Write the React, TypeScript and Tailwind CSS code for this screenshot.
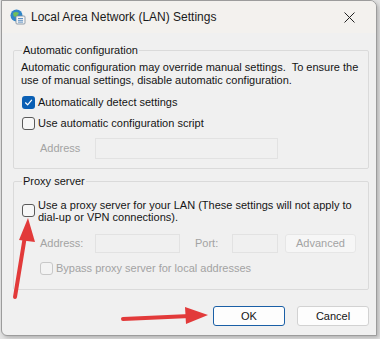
import React from 'react';

const font = { fontFamily: '"Liberation Sans", Arial, sans-serif' };

function Check({ checked, disabled }: { checked?: boolean; disabled?: boolean }) {
  if (checked) {
    return (
      <span className="flex h-[13px] w-[13px] shrink-0 items-center justify-center rounded-[3px] bg-[#0a5fb4]">
        <svg width="9" height="9" viewBox="0 0 9 9" fill="none">
          <path d="M1.5 4.8 L3.6 6.8 L7.6 2.2" stroke="white" strokeWidth="1.2" strokeLinecap="round" strokeLinejoin="round" />
        </svg>
      </span>
    );
  }
  return (
    <span
      className={
        'block h-[13px] w-[13px] shrink-0 rounded-[3px] border ' +
        (disabled ? 'border-[#c8c8c8] bg-[#f3f3f3]' : 'border-[#5a5a5a] bg-[#f7f7f7]')
      }
    />
  );
}

export default function App() {
  return (
    <div className="relative h-[339px] w-[380px] overflow-hidden bg-[#e4e4e4] text-[11px] text-[#151515]" style={font}>
      {/* dialog window */}
      <div className="ml-[1px] flex h-[336px] w-[376px] flex-col overflow-hidden rounded-tr-[7px] rounded-bl-[6px] border border-[#9c9c9c] bg-[#f0f0f0] shadow-[2px_2px_4px_rgba(0,0,0,0.22)]">
        {/* title bar */}
        <div className="flex h-[32px] shrink-0 items-center bg-[#f3f1ee] pl-[8px] pr-[21px]">
          <svg width="16" height="16" viewBox="0 0 16 16">
            <circle cx="6.5" cy="6.5" r="6" fill="#2f86c8" />
            <path d="M3 4 Q6 2 9 4 Q8 7 5 8 Q3 7 3 4Z" fill="#6fbf5a" />
            <rect x="6" y="7" width="9" height="8" rx="1" fill="#f4f4f4" stroke="#7a8a9a" strokeWidth="0.8" />
            <path d="M8 9.5h5M8 11.3h5M8 13.1h5" stroke="#3a78b8" strokeWidth="0.8" />
          </svg>
          <span className="ml-[5px] text-[12px] text-[#1a1a1a]">Local Area Network (LAN) Settings</span>
          <svg className="ml-auto" width="11" height="11" viewBox="0 0 11 11">
            <path d="M0.5 0.5 L10.5 10.5 M10.5 0.5 L0.5 10.5" stroke="#222" strokeWidth="1" />
          </svg>
        </div>

        {/* body */}
        <div className="flex flex-col pl-[11px] pr-[7px] pt-[10px]">
          <fieldset className="h-[126px] rounded-[2px] border border-[#dadada] px-[7px]">
            <legend className="ml-[1px] px-[1px] leading-[14px]">Automatic configuration</legend>
            <p className="mt-[4px] whitespace-nowrap leading-[13px]">
              Automatic configuration may override manual settings.&nbsp; To ensure the
              <br />
              use of manual settings, disable automatic configuration.
            </p>
            <div className="ml-[1px] mt-[9px] flex h-[13px] items-center gap-[3px]">
              <Check checked />
              <span>Automatically detect settings</span>
            </div>
            <div className="ml-[1px] mt-[8px] flex h-[13px] items-center gap-[3px]">
              <Check />
              <span>Use automatic configuration script</span>
            </div>
            <div className="mt-[8px] flex items-center">
              <span className="ml-[19px] w-[55px] text-[#a3a3a3]">Address</span>
              <span className="h-[21px] w-[183px] border border-[#e2e2e2] bg-[#f0f0f0]" />
            </div>
          </fieldset>

          <fieldset className="mt-[5px] h-[116px] rounded-[2px] border border-[#dadada] px-[7px]">
            <legend className="ml-[1px] px-[1px] leading-[14px]">Proxy server</legend>
            <div className="ml-[1px] mt-[11px] flex items-start gap-[3px]">
              <span className="mt-[5px]">
                <Check />
              </span>
              <span className="whitespace-nowrap leading-[12px]">
                Use a proxy server for your LAN (These settings will not apply to
                <br />
                dial-up or VPN connections).
              </span>
            </div>
            <div className="mt-[11px] flex items-center text-[#a3a3a3]">
              <span className="ml-[19px] w-[55px]">Address:</span>
              <span className="h-[19px] w-[85px] border border-[#e2e2e2]" />
              <span className="ml-[15px] w-[37px]">Port:</span>
              <span className="h-[19px] w-[46px] border border-[#e2e2e2]" />
              <span className="ml-[7px] flex h-[19px] w-[71px] items-center justify-center rounded-[3px] border border-[#e6e6e6] bg-[#f6f6f6]">
                Advanced
              </span>
            </div>
            <div className="ml-[19px] mt-[9px] flex h-[13px] items-center gap-[3px] text-[#a3a3a3]">
              <Check disabled />
              <span>Bypass proxy server for local addresses</span>
            </div>
          </fieldset>

          <div className="mt-[16px] flex justify-end gap-[12px]">
            <button className="h-[20px] w-[72px] rounded-[3px] border border-[#1a5fa6] bg-[#fdfdfd] text-[11px]">OK</button>
            <button className="h-[20px] w-[72px] rounded-[3px] border border-[#d2d2d2] bg-[#fdfdfd] text-[11px]">Cancel</button>
          </div>
        </div>
      </div>

      {/* red annotation arrows */}
      <svg className="pointer-events-none absolute left-0 top-0" width="380" height="339" viewBox="0 0 380 339">
        <path d="M15 297 L25 236" stroke="#e23a3a" strokeWidth="4" strokeLinecap="round" />
        <path d="M28 218 L19 240 L35 242 Z" fill="#e23a3a" />
        <path d="M123 319 L190 316" stroke="#e23a3a" strokeWidth="4" strokeLinecap="round" />
        <path d="M208 315 L185 307 L186 324 Z" fill="#e23a3a" />
      </svg>
    </div>
  );
}
